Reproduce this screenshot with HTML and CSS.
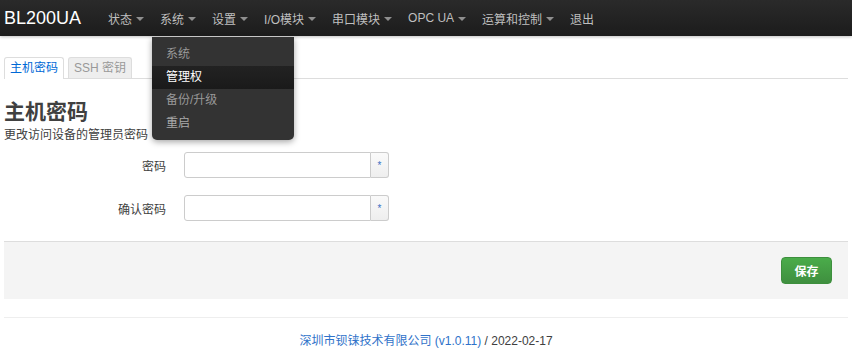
FILE: index.html
```html
<!DOCTYPE html>
<html lang="zh-CN">
<head>
    <meta charset="UTF-8">
    <title>BL200UA - 管理权</title>
    <link rel="stylesheet" href="styles.css">
</head>
<body>
    <header class="topbar">
        <a class="brand" href="#">BL200UA</a>
        <ul class="nav">
            <li><a href="#">状态<span class="caret"></span></a></li>
            <li class="open">
                <a href="#">系统<span class="caret"></span></a>
                <ul class="dropdown">
                    <li><a href="#">系统</a></li>
                    <li class="hover"><a href="#">管理权</a></li>
                    <li><a href="#">备份/升级</a></li>
                    <li><a class="light" href="#">重启</a></li>
                </ul>
            </li>
            <li><a href="#">设置<span class="caret"></span></a></li>
            <li><a href="#">I/O模块<span class="caret"></span></a></li>
            <li><a href="#">串口模块<span class="caret"></span></a></li>
            <li><a href="#">OPC UA<span class="caret"></span></a></li>
            <li><a href="#">运算和控制<span class="caret"></span></a></li>
            <li><a href="#">退出</a></li>
        </ul>
    </header>

    <div class="container">
        <ul class="tabs">
            <li class="active"><a href="#">主机密码</a></li>
            <li><a href="#">SSH 密钥</a></li>
        </ul>

        <form class="cbi-map">
            <h2>主机密码</h2>
            <div class="map-descr">更改访问设备的管理员密码</div>

            <div class="field">
                <label for="pw1">密码</label>
                <div class="input-group">
                    <input type="password" id="pw1">
                    <span class="addon">*</span>
                </div>
            </div>
            <div class="field">
                <label for="pw2">确认密码</label>
                <div class="input-group">
                    <input type="password" id="pw2">
                    <span class="addon">*</span>
                </div>
            </div>

            <div class="actions">
                <button class="btn-save" type="button">保存</button>
            </div>
        </form>

        <footer>
            <a href="#">深圳市钡铼技术有限公司 (v1.0.11)</a> / 2022-02-17
        </footer>
    </div>
</body>
</html>
```
FILE: styles.css
```css
body {
    margin: 0;
    padding: 0;
    font-family: "Liberation Sans", Arial, "Noto Sans CJK SC", sans-serif;
    font-size: 12px;
    color: #404040;
    background: #fff;
}
a {
    text-decoration: none;
}
ul {
    list-style: none;
    margin: 0;
    padding: 0;
}

/* top bar */
.topbar {
    height: 36px;
    background: linear-gradient(#2a2a2a, #1c1c1c);
    display: flex;
    align-items: center;
    box-shadow: 0 1px 3px rgba(0, 0, 0, 0.25);
}
.brand {
    color: #fff;
    font-size: 18px;
    padding: 0 20px 0 4px;
    width: 76px;
    line-height: 36px;
}
.nav {
    display: flex;
    height: 36px;
}
.nav > li {
    position: relative;
}
.nav > li > a {
    display: flex;
    align-items: center;
    height: 36px;
    padding: 0 8px;
    color: #bfbfbf;
}
.caret {
    display: inline-block;
    width: 0;
    height: 0;
    margin-left: 4px;
    margin-top: 1px;
    border-left: 4px solid transparent;
    border-right: 4px solid transparent;
    border-top: 4px solid #8f8f8f;
}
.dropdown {
    position: absolute;
    top: 37px;
    left: 0;
    width: 142px;
    padding: 6px 0 5px;
    background: #333;
    border-radius: 0 0 5px 5px;
    box-shadow: 0 2px 6px rgba(0, 0, 0, 0.35);
    z-index: 10;
}
.dropdown a {
    display: block;
    padding: 0 14px;
    line-height: 23px;
    color: #999;
}
.dropdown a.light {
    color: #aaa;
}
.dropdown .hover a {
    background: linear-gradient(#222, #1a1a1a);
    color: #fff;
}

/* content */
.container {
    padding: 0 4px;
}
.tabs {
    display: flex;
    margin-top: 21px;
    border-bottom: 1px solid #ddd;
    height: 21px;
}
.tabs li {
    margin-right: 4px;
}
.tabs a {
    display: block;
    height: 20px;
    line-height: 21px;
    padding: 0 5px;
    border: 1px solid #ddd;
    border-bottom: none;
    border-radius: 3px 3px 0 0;
    background: #eee;
    color: #999;
}
.tabs .active a {
    background: #fff;
    color: #0069d6;
    height: 21px;
}
.cbi-map h2 {
    margin: 21px 0 0;
    font-size: 21px;
    line-height: 24px;
    color: #404040;
}
.map-descr {
    margin-top: 2px;
    line-height: 18px;
}
.field {
    display: flex;
    align-items: center;
    margin-top: 8px;
}
.field + .field {
    margin-top: 17px;
}
.field label {
    width: 162px;
    text-align: right;
    padding-right: 18px;
    font-size: 12px;
}
.input-group {
    display: flex;
    height: 26px;
}
.input-group input {
    width: 187px;
    height: 26px;
    box-sizing: border-box;
    border: 1px solid #ccc;
    border-radius: 3px 0 0 3px;
    padding: 4px;
    margin: 0;
}
.addon {
    width: 18px;
    box-sizing: border-box;
    border: 1px solid #ccc;
    border-left: none;
    border-radius: 0 3px 3px 0;
    background: linear-gradient(#fafafa, #eee);
    color: #3a70c4;
    font-size: 10px;
    text-align: center;
    line-height: 25px;
}
.actions {
    margin-top: 20px;
    height: 58px;
    box-sizing: border-box;
    background: #f4f4f4;
    border-top: 1px solid #ddd;
    display: flex;
    justify-content: flex-end;
    align-items: flex-start;
    padding: 15px 16px 0;
}
.btn-save {
    width: 51px;
    height: 27px;
    border: 1px solid #3d8f3d;
    border-radius: 4px;
    background: linear-gradient(#4aac4a, #3f8f3f);
    color: #fff;
    font-family: "Noto Sans CJK SC", sans-serif;
    font-size: 12px;
    font-weight: bold;
    cursor: pointer;
}
footer {
    margin-top: 18px;
    border-top: 1px solid #eee;
    text-align: center;
    padding-top: 16px;
    line-height: 14px;
    font-size: 12px;
}
footer a {
    color: #2f72c9;
}
```
